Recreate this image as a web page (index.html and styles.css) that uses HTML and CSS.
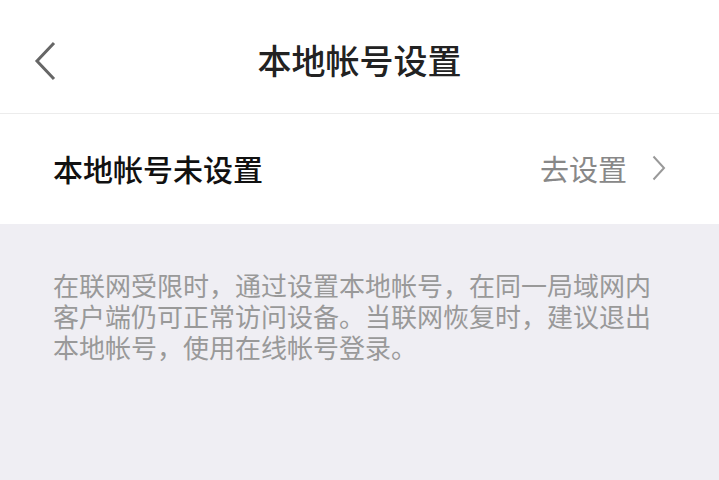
FILE: index.html
```html
<!DOCTYPE html>
<html lang="zh-CN">
<head>
<meta charset="utf-8">
<link rel="stylesheet" href="styles.css">
</head>
<body>
<div class="page">
  <header class="nav">
    <span class="back">
      <svg width="24" height="40" viewBox="0 0 24 40"><polyline points="21,2 4,20 21,38" fill="none" stroke="#666" stroke-width="3"/></svg>
    </span>
    <h1 class="title">本地帐号设置</h1>
  </header>
  <div class="row">
    <span class="label">本地帐号未设置</span>
    <span class="value">去设置
      <svg class="chev" width="14" height="26" viewBox="0 0 14 26"><polyline points="1.5,1.5 12,13 1.5,24.5" fill="none" stroke="#999" stroke-width="2"/></svg>
    </span>
  </div>
  <div class="desc">在联网受限时，通过设置本地帐号，在同一局域网内客户端仍可正常访问设备。当联网恢复时，建议退出本地帐号，使用在线帐号登录。</div>
</div>
</body>
</html>
```
FILE: styles.css
```css
html, body { margin: 0; padding: 0; }
body { font-family: "Noto Sans CJK SC", "Noto Sans", sans-serif; background: #efeef3; }
.page { width: 719px; height: 480px; background: #efeef3; }
.nav { height: 114px; box-sizing: border-box; padding-top: 6px; background: #fff; border-bottom: 1px solid #ececec; display: flex; align-items: center; justify-content: center; position: relative; }
.back { position: absolute; left: 33px; top: 41px; display: flex; }
.title { margin: 0; font-size: 34px; font-weight: 500; color: #222; line-height: 1; }
.row { height: 110px; background: #fff; display: flex; align-items: center; justify-content: space-between; padding: 0 53px 0 53px; }
.label { font-size: 30px; font-weight: 500; color: #111; padding-bottom: 3px; }
.value { font-size: 29px; color: #888; display: flex; align-items: center; gap: 25px; padding-bottom: 3px; }
.chev { display: block; }
.desc { padding: 45px 53px 0 53px; font-size: 26px; line-height: 31px; color: #999; }
```
